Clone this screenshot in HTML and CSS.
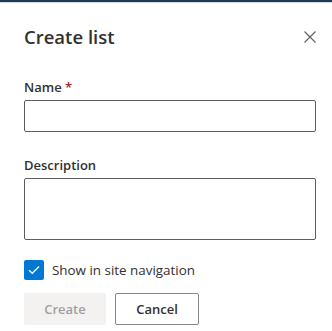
FILE: index.html
```html
<!DOCTYPE html>
<html lang="en">
  <head>
    <meta charset="UTF-8" />
    <title>Create list</title>
    <link rel="stylesheet" href="styles.css">
  </head>
  <body>
    <div class="top-bar"></div>
    <div class="panel">
      <div class="panel-header">
        <h1 class="panel-title">Create list</h1>
        <button class="close-btn" aria-label="Close">
          <svg width="12" height="12" viewBox="0 0 12 12">
            <path d="M0.5 0.5 L11.5 11.5 M11.5 0.5 L0.5 11.5" stroke="#605e5c" stroke-width="1.1" fill="none" />
          </svg>
        </button>
      </div>

      <div class="field">
        <label for="listName">Name <span class="required">*</span></label>
        <input type="text" id="listName" class="text-input" />
      </div>

      <div class="field">
        <label for="listDesc">Description</label>
        <textarea id="listDesc" class="text-area"></textarea>
      </div>

      <label class="check-row">
        <span class="check-box">
          <svg width="12" height="10" viewBox="0 0 12 10">
            <path d="M1 5.2 L4.3 8.3 L11 1.5" stroke="#fff" stroke-width="1.3" fill="none" />
          </svg>
        </span>
        <span class="check-label">Show in site navigation</span>
      </label>

      <div class="actions">
        <button class="btn btn-primary" disabled>Create</button>
        <button class="btn btn-default">Cancel</button>
      </div>
    </div>
  </body>
</html>
```

FILE: styles.css
```css
body {
  margin: 0;
  background-color: #fff;
  font-family: "Open Sans", "Noto Sans", sans-serif;
  color: #323130;
}

.top-bar {
  height: 2px;
  background-color: #1b3a5c;
  border-bottom: 1px solid #d6dbe0;
}

.panel {
  padding: 0 16px 0 24px;
}

.panel-header {
  display: flex;
  justify-content: space-between;
  align-items: center;
  height: 28px;
  margin-top: 20px;
}

.panel-title {
  margin: 0;
  font-size: 18.5px;
  line-height: 28px;
  font-weight: 600;
  color: #323130;
}

.close-btn {
  background: none;
  border: none;
  padding: 0;
  width: 12px;
  height: 12px;
  cursor: pointer;
  display: flex;
}

.field {
  margin-top: 21px;
}

.field + .field {
  margin-top: 18px;
}

.field label {
  display: block;
  font-size: 13px;
  font-weight: 600;
  line-height: 20px;
  padding: 5px 0 3px;
}

.required {
  color: #a4262c;
}

.text-input,
.text-area {
  display: block;
  box-sizing: border-box;
  width: 292px;
  border: 1px solid #605e5c;
  border-radius: 2px;
  margin: 0;
  font-family: inherit;
}

.text-input {
  height: 32px;
}

.text-area {
  height: 62px;
  resize: none;
}

.check-row {
  display: flex;
  align-items: center;
  margin-top: 20px;
  height: 20px;
}

.check-box {
  width: 20px;
  height: 20px;
  background-color: #0078d4;
  border-radius: 2px;
  display: flex;
  align-items: center;
  justify-content: center;
}

.check-label {
  margin-left: 8px;
  font-size: 13.4px;
}

.actions {
  display: flex;
  gap: 9px;
  margin-top: 13px;
}

.btn {
  height: 32px;
  border-radius: 2px;
  font-family: inherit;
  font-size: 13px;
  font-weight: 600;
  padding: 0 16px;
}

.btn-primary {
  width: 82px;
  background-color: #f3f2f1;
  color: #a19f9d;
  border: none;
}

.btn-default {
  width: 84px;
  background-color: #fff;
  color: #323130;
  border: 1px solid #8a8886;
}
```
